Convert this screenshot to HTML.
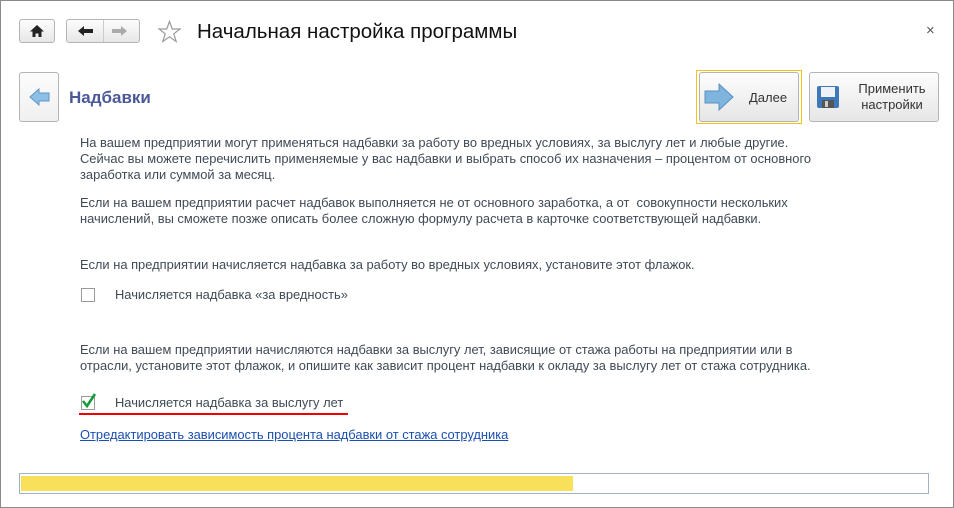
<!DOCTYPE html>
<html><head><meta charset="utf-8"><style>
*{margin:0;padding:0;box-sizing:border-box}
body{width:954px;height:508px;background:#fff;font-family:"Liberation Sans",sans-serif;position:relative;overflow:hidden}
.a{position:absolute}
.btn{position:absolute;border:1px solid #b4b4b4;border-radius:3px;background:linear-gradient(#fdfdfd,#e6e6e6)}
.t{position:absolute;left:80px;font-size:12.9px;color:#404a55;line-height:16px;white-space:nowrap}
</style></head><body>
<div class="a" style="left:0;top:0;width:954px;height:508px;border:1px solid #8a8a8a"></div>
<div class="btn" style="left:19px;top:19px;width:36px;height:24px"></div>
<svg class="a" style="left:29px;top:24px" width="16" height="14"><path d="M8 1L1 7.5H3.5V13H6.5V9.5H9.5V13H12.5V7.5H15Z" fill="#222"/></svg>
<div class="btn" style="left:66px;top:19px;width:74px;height:24px"></div>
<div class="a" style="left:103px;top:20px;width:1px;height:22px;background:#ccc"></div>
<svg class="a" style="left:77px;top:25px" width="18" height="12"><path d="M1 6L7 1V4H16V8H7V11Z" fill="#222"/></svg>
<svg class="a" style="left:110px;top:25px" width="18" height="12"><path d="M17 6L11 1V4H2V8H11V11Z" fill="#aaa"/></svg>
<svg class="a" style="left:157px;top:20px" width="25" height="24"><path d="M12.5 1.5L15.3 9H23L16.8 13.8L19.2 21.5L12.5 16.8L5.8 21.5L8.2 13.8L2 9H9.7Z" fill="none" stroke="#9a9a9a" stroke-width="1.2"/></svg>
<div class="a" style="left:197px;top:20px;font-size:20.5px;color:#111">Начальная настройка программы</div>
<div class="a" style="left:926px;top:22px;font-size:15px;color:#555">×</div>
<div class="btn" style="left:19px;top:72px;width:40px;height:50px;background:linear-gradient(#fcfcfc,#f0f0f0)"></div>
<svg class="a" style="left:29px;top:88px" width="22" height="18"><path d="M1 9L10 1V5H20V13H10V17Z" fill="#8cc0e6" stroke="#5f95c4"/></svg>
<div class="a" style="left:69px;top:88px;font-size:17px;font-weight:bold;color:#4b5998">Надбавки</div>
<div class="a" style="left:696px;top:70px;width:106px;height:54px;border:1px solid #f0c419"></div>
<div class="btn" style="left:699px;top:72px;width:100px;height:50px"></div>
<svg class="a" style="left:703px;top:82px" width="32" height="30"><path d="M2 9H16V2L30 15L16 28V21H2Z" fill="#7fb4df" stroke="#5a8fc0"/></svg>
<div class="a" style="left:749px;top:90px;font-size:13px;color:#333">Далее</div>
<div class="btn" style="left:809px;top:72px;width:130px;height:50px"></div>
<svg class="a" style="left:816px;top:85px" width="24" height="24"><rect x="1" y="1" width="22" height="22" rx="2" fill="#3f78b8"/><rect x="5" y="2" width="14" height="10" fill="#eef2f6"/><rect x="6" y="15" width="12" height="8" fill="#555"/><rect x="9" y="16" width="3" height="6" fill="#ccc"/></svg>
<div class="a" style="left:852px;top:81px;width:80px;text-align:center;font-size:13px;color:#333;line-height:16px">Применить<br>настройки</div>
<div class="t" style="top:135px">На вашем предприятии могут применяться надбавки за работу во вредных условиях, за выслугу лет и любые другие.<br>Сейчас вы можете перечислить применяемые у вас надбавки и выбрать способ их назначения – процентом от основного<br>заработка или суммой за месяц.</div>
<div class="t" style="top:195px">Если на вашем предприятии расчет надбавок выполняется не от основного заработка, а от &nbsp;совокупности нескольких<br>начислений, вы сможете позже описать более сложную формулу расчета в карточке соответствующей надбавки.</div>
<div class="t" style="top:257px">Если на предприятии начисляется надбавка за работу во вредных условиях, установите этот флажок.</div>
<div class="a" style="left:81px;top:288px;width:14px;height:14px;border:1px solid #9a9a9a;background:#fff"></div>
<div class="t" style="left:115px;top:287px">Начисляется надбавка «за вредность»</div>
<div class="t" style="top:342px">Если на вашем предприятии начисляются надбавки за выслугу лет, зависящие от стажа работы на предприятии или в<br>отрасли, установите этот флажок, и опишите как зависит процент надбавки к окладу за выслугу лет от стажа сотрудника.</div>
<div class="a" style="left:81px;top:396px;width:14px;height:14px;border:1px solid #9a9a9a;background:#fff"></div>
<svg class="a" style="left:80px;top:392px" width="18" height="18"><path d="M3 9L7 14L15 2" fill="none" stroke="#1a9a3a" stroke-width="2.6"/></svg>
<div class="t" style="left:115px;top:395px">Начисляется надбавка за выслугу лет</div>
<div class="a" style="left:79px;top:413px;width:269px;height:2px;background:#e00"></div>
<div class="t" style="top:427px;color:#1a4fb0;text-decoration:underline">Отредактировать зависимость процента надбавки от стажа сотрудника</div>
<div class="a" style="left:19px;top:473px;width:910px;height:21px;border:1px solid #9fb2c6;background:#fff"></div>
<div class="a" style="left:21px;top:476px;width:552px;height:15px;background:#f8e05a"></div>
</body></html>
